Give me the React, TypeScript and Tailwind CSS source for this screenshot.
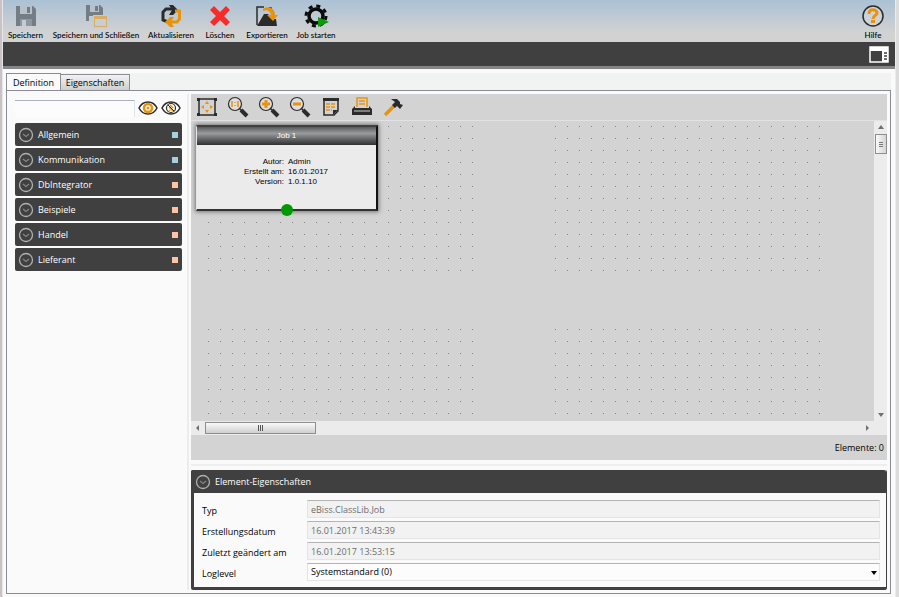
import React from "react";

type IconProps = { children: React.ReactNode; w?: number; h?: number };
const Svg = ({ children, w = 22, h = 22 }: IconProps) => (
  <svg width={w} height={h} viewBox={`0 0 ${w} ${h}`} fill="none" aria-hidden="true" className="block shrink-0">
    {children}
  </svg>
);

const SaveIcon = () => (
  <Svg>
    <path d="M1 1H18L21 4V21H1Z" fill="#747d86" />
    <path d="M5 1H17V9H5Z" fill="#b6c1cb" />
    <path d="M12 2H15V8H12Z" fill="#747d86" />
    <path d="M5 14H17V21H5Z" fill="#8f979f" />
    <path d="M7 15H11V21H7Z" fill="#c3cbd3" />
  </Svg>
);

const SaveCloseIcon = () => (
  <Svg w={24} h={24}>
    <path d="M2 1H16L19 4V17H2Z" fill="#747d86" />
    <path d="M6 1H15V8H6Z" fill="#b6c1cb" />
    <path d="M11 2H14V7H11Z" fill="#747d86" />
    <path d="M5 12H9V17H5Z" fill="#c3cbd3" />
    <path d="M9 11H24V24H9Z" fill="#c4ccd3" />
    <path d="M10.5 12.5H22.5V22.5H10.5Z" fill="#c8cdd2" stroke="#d9ad68" />
    <path d="M10 12H23V15H10Z" fill="#d9ad68" />
  </Svg>
);

const RefreshIcon = () => (
  <Svg>
    <path d="M8 17L3 15V7L6 4H12" stroke="#2b2b2b" strokeWidth="3" />
    <path d="M9 0H13L18 5L13 10H9L12 5Z" fill="#2b2b2b" />
    <path d="M15 6H19.500V14L17 17H11" stroke="#e8930c" strokeWidth="3" />
    <path d="M14 12H10L5 17L10 22H14L11 17Z" fill="#e8930c" />
  </Svg>
);

const DeleteIcon = () => (
  <Svg>
    <path d="M5 1L11 7L17 1L21 5L15 11L21 17L17 21L11 15L5 21L1 17L7 11L1 5Z" fill="#f92a2a" />
  </Svg>
);

const ExportIcon = () => (
  <Svg w={24}>
    <path d="M2 20V2H9M14 3H16V5" stroke="#2b2b2b" strokeWidth="1.5" />
    <path d="M2 21L9 9H13L18 14H21L22 21Z" fill="#2b2b2b" />
    <path d="M8 4C13 0 20 3 20 10H23L18 16L12 10H16C15 6 12 4 8 6Z" fill="#e8930c" />
  </Svg>
);

const GearIcon = () => (
  <Svg w={26} h={24}>
    <circle cx="13" cy="12" r="7" stroke="#0b0b0b" strokeWidth="3.500" />
    <circle cx="13" cy="12" r="10" stroke="#0b0b0b" strokeWidth="3" strokeDasharray="4 3.85" />
    <path d="M15 13L26 18L15 23Z" fill="#0a9a0a" />
  </Svg>
);

const HelpIcon = () => (
  <Svg w={24} h={24}>
    <circle cx="12" cy="12" r="10" stroke="#2b2b2b" strokeWidth="1.500" fill="#ccd3da" />
    <path d="M8 10C8 4 16 5 16 9C16 12 12 11 12 15" stroke="#e8930c" strokeWidth="3" />
    <path d="M10 16H14V19H10Z" fill="#e8930c" />
  </Svg>
);

const LayoutIcon = () => (
  <Svg w={20} h={17}>
    <rect x="1" y="1" width="18" height="15" stroke="#fff" strokeWidth="1.500" />
    <path d="M1 1H19V5H1ZM13 5H19V16H13Z" fill="#fff" />
    <path d="M15 7H18M15 10H18M15 13H18" stroke="#404040" strokeWidth="1.500" />
  </Svg>
);

const EyeIcon = ({ off = false }: { off?: boolean }) => (
  <Svg w={20} h={16}>
    <path d="M1 8C5 0 15 0 19 8C15 16 5 16 1 8Z" stroke="#2b2b2b" strokeWidth="1.500" fill="#fff" />
    {off ? (
      <>
        <circle cx="10" cy="8" r="4.500" stroke="#2b2b2b" strokeWidth="1.200" />
        <path d="M8 7L12 11M8 10L9 11M9 5L12 8" stroke="#e8930c" strokeWidth="1.500" />
        <path d="M7 5L13 11" stroke="#2b2b2b" />
      </>
    ) : (
      <>
        <circle cx="10" cy="8" r="4" stroke="#e8930c" strokeWidth="2.500" />
        <circle cx="10" cy="8" r="1.500" fill="#e8930c" />
      </>
    )}
  </Svg>
);

const FitIcon = () => (
  <Svg>
    <path d="M3 3H19V19H3Z" stroke="#2b2b2b" strokeWidth="1.500" />
    <path d="M1 2H4V5H1ZM18 2H21V5H18ZM1 17H4V20H1ZM18 17H21V20H18Z" fill="#2b2b2b" />
    <path d="M11 5L13 8H9ZM11 17L13 14H9ZM5 11L8 9V13ZM17 11L14 9V13Z" fill="#e8930c" />
  </Svg>
);

const Lens = ({ kind }: { kind: "one" | "in" | "out" }) => (
  <Svg>
    <circle cx="8" cy="8" r="6.500" stroke="#2b2b2b" strokeWidth="1.200" fill="#dedede" />
    <path d="M12 12L15 15" stroke="#2b2b2b" strokeWidth="1.500" />
    <path d="M14 14L20 20" stroke="#2b2b2b" strokeWidth="4" />
    {kind === "one" && <path d="M5 5V11M11 5V11M8 6V7M8 9V10" stroke="#e8930c" strokeWidth="1.500" />}
    {kind === "in" && <path d="M4 8H12M8 4V12" stroke="#e8930c" strokeWidth="3" />}
    {kind === "out" && <path d="M4 8H12" stroke="#e8930c" strokeWidth="3" />}
  </Svg>
);

const NoteIcon = () => (
  <Svg>
    <path d="M4 3H18V15L14 19H4Z" stroke="#2b2b2b" strokeWidth="1.500" />
    <path d="M3 2H19V5H3Z" fill="#2b2b2b" />
    <path d="M6 8H16M6 11H16M6 14H12" stroke="#e8930c" strokeWidth="1.500" strokeDasharray="4 1" />
    <path d="M13 19V14H18Z" fill="#2b2b2b" />
  </Svg>
);

const PrintIcon = () => (
  <Svg>
    <path d="M6 11V2H16V11" stroke="#e8930c" strokeWidth="1.500" />
    <path d="M8 5H14M8 8H14" stroke="#e8930c" strokeWidth="1.500" />
    <path d="M1 13L4 10V12H18V10L21 13V19H1Z" fill="#2b2b2b" />
    <path d="M3 15H19" stroke="#cfcfcf" />
  </Svg>
);

const HammerIcon = () => (
  <Svg>
    <path d="M12 10L3 19" stroke="#e8930c" strokeWidth="3.500" />
    <path d="M9 3L15 3L18 6V8L21 9L18 13L15 10L13 12L10 9L13 6Z" fill="#2b2b2b" />
  </Svg>
);

const Chevron = () => (
  <Svg w={16} h={16}>
    <circle cx="8" cy="8" r="6.500" stroke="#b0b0b0" strokeWidth="1.300" />
    <path d="M5 7L8 9.500L11 7" stroke="#858585" strokeWidth="1.200" />
  </Svg>
);

const ACTIONS = [
  { label: "Speichern", icon: <SaveIcon />, w: "w-[45px]" },
  { label: "Speichern und Schließen", icon: <SaveCloseIcon />, w: "w-[96px]" },
  { label: "Aktualisieren", icon: <RefreshIcon />, w: "w-[54px]" },
  { label: "Löschen", icon: <DeleteIcon />, w: "w-[44px]" },
  { label: "Exportieren", icon: <ExportIcon />, w: "w-[50px]" },
  { label: "Job starten", icon: <GearIcon />, w: "w-[48px]" },
];

const GROUPS = [
  { name: "Allgemein", color: "bg-[#a6cfe0]" },
  { name: "Kommunikation", color: "bg-[#a6cfe0]" },
  { name: "DbIntegrator", color: "bg-[#fcc3a4]" },
  { name: "Beispiele", color: "bg-[#fcc3a4]" },
  { name: "Handel", color: "bg-[#fcc3a4]" },
  { name: "Lieferant", color: "bg-[#fcc3a4]" },
];

const TOOLS = [
  { label: "Einpassen", icon: <FitIcon /> },
  { label: "Originalgröße", icon: <Lens kind="one" /> },
  { label: "Vergrößern", icon: <Lens kind="in" /> },
  { label: "Verkleinern", icon: <Lens kind="out" /> },
  { label: "Notiz", icon: <NoteIcon /> },
  { label: "Drucken", icon: <PrintIcon /> },
  { label: "Werkzeuge", icon: <HammerIcon /> },
];

const FIELDS = [
  { id: "typ", label: "Typ", value: "eBiss.ClassLib.Job" },
  { id: "created", label: "Erstellungsdatum", value: "16.01.2017 13:43:39" },
  { id: "changed", label: "Zuletzt geändert am", value: "16.01.2017 13:53:15" },
];

const JOB = [
  ["Autor:", "Admin"],
  ["Erstellt am:", "16.01.2017"],
  ["Version:", "1.0.1.10"],
];

const GridDots = () => (
  <svg aria-hidden="true" className="absolute inset-0 h-full w-full">
    {[17, 364].map((x0) =>
      [[5, 13], [208, 8]].map(([y0, rows]) =>
        Array.from({ length: rows }, (_, r) =>
          Array.from({ length: 23 }, (_, c) => (
            <rect key={`${x0}-${y0}-${r}-${c}`} x={x0 + c * 12} y={y0 + r * 12} width="1" height="1" fill="#858585" />
          )),
        ),
      ),
    )}
  </svg>
);

const Arrow = ({ d }: { d: string }) => (
  <Svg w={8} h={8}>
    <path d={d} fill="#707070" />
  </Svg>
);

export default function App() {
  return (
    <div className="flex min-h-screen bg-[#fafafa] font-['Open_Sans','Noto_Sans',sans-serif] text-[9px] leading-3 text-black">
      <div className="w-[3px] shrink-0 border-r border-[#e6e6e6] bg-[#c9c2c6]" />
      <div className="flex min-w-0 flex-1 flex-col">
        <header className="flex h-[42px] items-start bg-linear-to-b from-[#abc1d5] to-[#d2d2d2] to-80% pt-1 font-['Lato','Open_Sans',sans-serif] text-[8px] font-medium">
          <div className="flex">
            {ACTIONS.map((a) => (
              <button key={a.label} type="button" className={`flex shrink-0 flex-col items-center gap-px whitespace-nowrap ${a.w}`}>
                <span className="flex h-6 items-center">{a.icon}</span>
                <span>{a.label}</span>
              </button>
            ))}
          </div>
          <button type="button" className="mr-2.5 ml-auto flex flex-col items-center gap-px">
            <HelpIcon />
            <span>Hilfe</span>
          </button>
        </header>
        <div className="flex h-[27px] items-center justify-end border-b-3 border-[#868686] bg-[#404040] pr-1.5">
          <button type="button" aria-label="Ansicht">
            <LayoutIcon />
          </button>
        </div>

        <main className="flex flex-1 flex-col pt-1 pr-1 pb-[3px] pl-[3px]">
          <div role="tablist" className="flex h-[17px] items-end bg-[#f1f3f2]">
            <button type="button" role="tab" aria-selected="true" className="-mb-px h-[18px] w-[55px] border border-b-0 border-[#8b8d94] bg-[#fafafa]">
              Definition
            </button>
            <button type="button" role="tab" aria-selected="false" className="h-4 w-[69px] border border-b-0 border-l-0 border-[#8b8d94] bg-linear-to-b from-[#f2f2f2] to-[#cfcfcf]">
              Eigenschaften
            </button>
          </div>

          <div className="flex flex-1 border border-[#8b8d94] bg-[#fafafa] pt-[3px] pr-[3px] pb-[3px] pl-0.5">
            <aside className="w-[180px] shrink-0 border-r-2 border-[#ececec] pt-1.5 pl-1.5">
              <div className="flex h-[23px] items-start">
                <input aria-label="Suche" className="h-[17px] w-[120px] border-t border-r border-t-[#abb3c0] border-r-[#dfe3ea] bg-[#fcfcfc]" />
                <button type="button" aria-label="Einblenden" className="ml-[3px]">
                  <EyeIcon />
                </button>
                <button type="button" aria-label="Ausblenden" className="ml-[3px]">
                  <EyeIcon off />
                </button>
              </div>
              <ul className="flex w-[167px] flex-col gap-0.5">
                {GROUPS.map((g) => (
                  <li key={g.name}>
                    <button type="button" className="flex h-[23px] w-full items-center rounded-xs bg-[#404040] pr-1 pl-[3px] text-left font-medium text-white">
                      <Chevron />
                      <span className="ml-1 flex-1">{g.name}</span>
                      <span className={`size-1.5 ${g.color}`} />
                    </button>
                  </li>
                ))}
              </ul>
            </aside>

            <section className="ml-0.5 flex min-w-0 flex-1 flex-col">
              <div className="flex h-[27px] items-center border-b border-[#e2e2e2] bg-[#d3d3d3]">
                {TOOLS.map((t) => (
                  <button key={t.label} type="button" aria-label={t.label} className="flex w-[31px] justify-center">
                    {t.icon}
                  </button>
                ))}
              </div>
              <div className="flex min-h-[300px] flex-1">
                <div className="relative flex-1 overflow-hidden bg-[#d3d3d3]">
                  <GridDots />
                  <article className="absolute top-1 left-[5px] h-[86px] w-[182px] border-2 border-l border-t-[#404040] border-r-[#111] border-b-[#333] border-l-[#e4e4e4] bg-[#ebebeb] font-['Liberation_Sans',Arial,sans-serif] text-[8px] shadow-[0_0_4px_1px_#777]">
                    <h2 className="h-[18px] bg-linear-to-b from-[#5a5a5a] via-[#9a9d9f] via-35% to-[#303030] text-center leading-[18px] text-white">Job 1</h2>
                    <dl className="pt-3 leading-[10px]">
                      {JOB.map(([k, v]) => (
                        <div key={k} className="flex gap-1">
                          <dt className="w-[87px] text-right">{k}</dt>
                          <dd>{v}</dd>
                        </div>
                      ))}
                    </dl>
                    <span className="absolute -bottom-[7px] left-[84px] size-3 rounded-full bg-[#009a00]" />
                  </article>
                </div>
                <div className="flex w-[13px] flex-col items-center bg-[#ececec] py-0.5">
                  <Arrow d="M1 6L4 2L7 6Z" />
                  <div className="mt-[3px] flex h-5 w-3 flex-col justify-center gap-px border border-[#8e8e8e] bg-linear-to-r from-[#fafafa] to-[#d5d5d5] px-[3px]">
                    <i className="h-px bg-[#777]" />
                    <i className="h-px bg-[#777]" />
                    <i className="h-px bg-[#777]" />
                  </div>
                  <div className="flex-1" />
                  <Arrow d="M1 2H7L4 6Z" />
                </div>
              </div>
              <div className="flex h-3.5 items-center bg-[#ebebeb] pr-4 pl-[3px]">
                <Arrow d="M5 1V7L2 4Z" />
                <div className="ml-[3px] flex h-3 w-[111px] items-center justify-center gap-px border border-[#8e8e8e] bg-linear-to-b from-[#fafafa] to-[#cfcfcf]">
                  <i className="h-1.5 w-px bg-[#555]" />
                  <i className="h-1.5 w-px bg-[#555]" />
                  <i className="h-1.5 w-px bg-[#555]" />
                </div>
                <div className="flex-1" />
                <Arrow d="M3 1L6 4L3 7Z" />
              </div>
              <div className="flex h-[25px] items-center justify-end bg-[#d3d3d3] pr-[3px]">Elemente: 0</div>

              <div className="mt-1 h-0.5 bg-[#eeeeee]" />
              <section className="mt-1 rounded-xs border-[3px] border-t-0 border-r border-[#404040]">
                <h2 className="-ml-[3px] flex h-[23px] items-center gap-1 rounded-t-xs bg-[#404040] pl-1 font-medium text-white">
                  <Chevron />
                  Element-Eigenschaften
                </h2>
                <div className="flex flex-col gap-[3px] pt-[7px] pr-1.5 pb-1.5 pl-2">
                  {FIELDS.map((f) => (
                    <div key={f.id} className="flex h-[18px]">
                      <label htmlFor={f.id} className="w-[105px] shrink-0 pt-[5px]">{f.label}</label>
                      <input id={f.id} readOnly value={f.value} className="h-[18px] min-w-0 flex-1 border border-[#e4e4e4] border-t-[#b4b4b4] bg-[#f1f2f1] px-[3px] text-[#6d6d6d]" />
                    </div>
                  ))}
                  <div className="flex h-[18px]">
                    <label htmlFor="loglevel" className="w-[105px] shrink-0 pt-[5px]">Loglevel</label>
                    <div className="relative min-w-0 flex-1">
                      <select id="loglevel" className="block h-[18px] w-full appearance-none border border-[#e4e4e4] border-t-[#b4b4b4] bg-[#fcfcfc] px-[3px]">
                        <option>Systemstandard (0)</option>
                      </select>
                      <svg aria-hidden="true" width="6" height="4" viewBox="0 0 6 4" className="pointer-events-none absolute top-2 right-[3px]">
                        <path d="M0 0H6L3 4Z" fill="#000" />
                      </svg>
                    </div>
                  </div>
                </div>
              </section>
            </section>
          </div>
        </main>
      </div>
      <div className="w-1 shrink-0 border-l border-[#ececec] bg-[#dcdcdc]" />
    </div>
  );
}
